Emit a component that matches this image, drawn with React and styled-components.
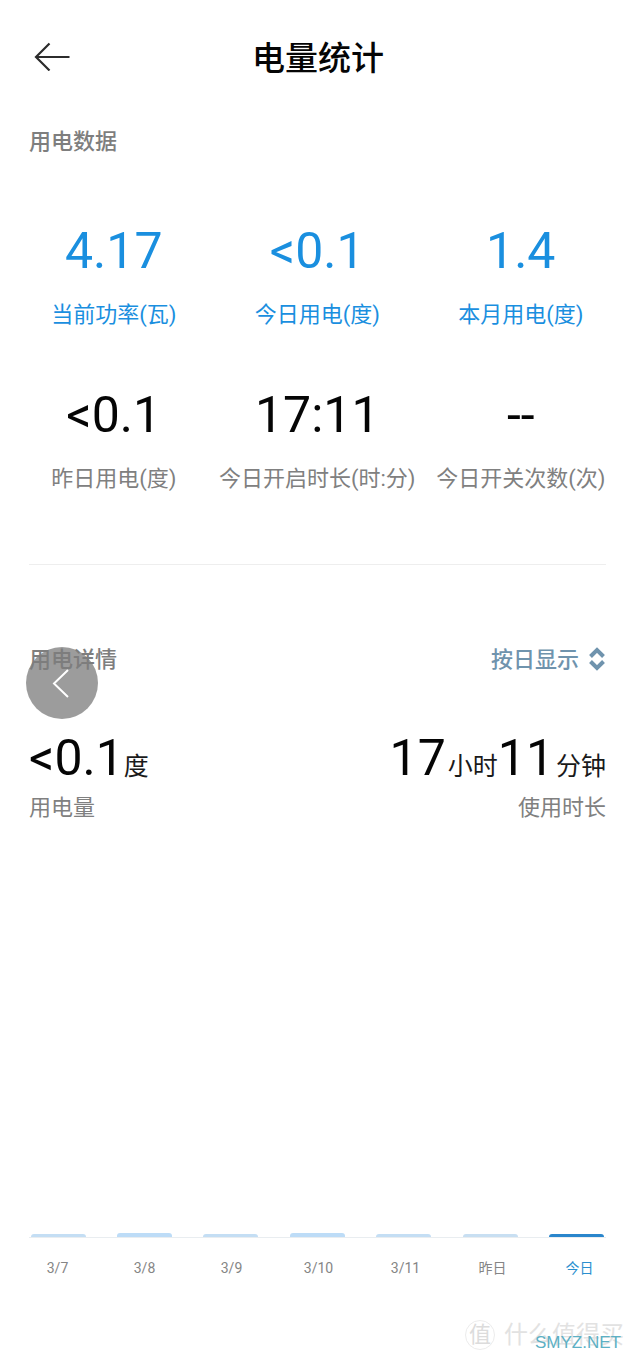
import React from "react";
import styled, { createGlobalStyle } from "styled-components";

const Global = createGlobalStyle`
  html, body { margin: 0; padding: 0; background: #fff; }
  body { font-family: Roboto, "Noto Sans CJK SC", sans-serif; }
`;
const Page = styled.div`
  position: relative;
  width: 632px;
  height: 1362px;
  overflow: hidden;
  background: #fff;
  display: flex;
  flex-direction: column;
`;
const Header = styled.header`
  position: relative;
  height: 58px;
  margin-top: 29px;
  display: flex;
  align-items: flex-start;
  justify-content: center;
  padding-left: 4px;
`;
const BackButton = styled.button`
  position: absolute;
  left: 34px;
  top: 12px;
  width: 36px;
  height: 30px;
  padding: 0;
  border: 0;
  background: none;
  color: #2c2c2c;
`;
const Title = styled.h1`
  margin: 0;
  font-size: 33px;
  line-height: 60px;
  font-weight: 500;
  color: #050505;
`;
const SectionTitle = styled.h2`
  margin: 0;
  font-size: 22px;
  line-height: 32px;
  font-weight: 500;
  color: #7e7e7e;
`;
const DataSection = styled.section`
  padding: 39px 26px 0 29px;
`;
const StatsGrid = styled.div`
  display: grid;
  grid-template-columns: repeat(3, 203.5px);
  margin: 61px 0 0 -17px;
  row-gap: 52px;
`;
const Stat = styled.div`
  display: flex;
  flex-direction: column;
  align-items: center;
  white-space: nowrap;
`;
const StatValue = styled.div`
  font-size: 50px;
  line-height: 64px;
  font-weight: 400;
  color: ${(p) => (p.$accent ? "#1a8fdf" : "#050505")};
`;
const StatLabel = styled.div`
  margin-top: 16px;
  font-size: 22px;
  line-height: 32px;
  font-weight: 400;
  color: ${(p) => (p.$accent ? "#1a8fdf" : "#808080")};
`;
const Divider = styled.hr`
  margin: 69px 26px 0 29px;
  border: 0;
  height: 1px;
  background: #eeeeee;
`;
const DetailSection = styled.section`
  padding: 79px 26px 0 29px;
`;
const DetailHead = styled.div`
  display: flex;
  justify-content: space-between;
  align-items: center;
`;
const ModeSwitch = styled.div`
  display: flex;
  align-items: center;
  gap: 9px;
  font-size: 22px;
  line-height: 32px;
  font-weight: 500;
  color: #6f93ad;
`;
const Chevrons = styled.svg`
  margin-bottom: 2px;
`;
const Totals = styled.div`
  display: flex;
  justify-content: space-between;
  margin-top: 52px;
`;
const Total = styled.div`
  display: flex;
  flex-direction: column;
  align-items: ${(p) => (p.$end ? "flex-end" : "flex-start")};
`;
const TotalValue = styled.div`
  display: flex;
  align-items: baseline;
  height: 60px;
  white-space: nowrap;
  color: #050505;
`;
const Big = styled.span`
  font-size: 50px;
  line-height: 60px;
  margin-right: ${(p) => p.$gap}px;
`;
const Unit = styled.span`
  font-size: 25px;
  line-height: 60px;
  font-weight: 400;
  color: #1a1a1a;
`;
const TotalLabel = styled.div`
  margin-top: 4px;
  font-size: 22px;
  line-height: 32px;
  font-weight: 400;
  color: #808080;
`;
const Chart = styled.div`
  margin: 401px 0 0 15px;
  display: grid;
  grid-template-columns: repeat(7, 86.4px);
  height: 12px;
  position: relative;
  &::after {
    content: "";
    position: absolute;
    left: 14px;
    right: 26px;
    bottom: -1px;
    height: 1px;
    background: #e9edf0;
  }
`;
const BarCell = styled.div`
  display: flex;
  align-items: flex-end;
  justify-content: center;
`;
const Bar = styled.div`
  width: 55px;
  height: ${(p) => p.$h}px;
  border-radius: 3px 3px 0 0;
  background: ${(p) => p.$c};
`;
const Axis = styled.div`
  margin: 21px 0 0 14px;
  display: grid;
  grid-template-columns: repeat(7, 87px);
`;
const Tick = styled.div`
  text-align: center;
  font-size: 14px;
  line-height: 20px;
  font-weight: 400;
  color: ${(p) => (p.$active ? "#2a8fcf" : "#858585")};
`;
const FloatBack = styled.button`
  position: absolute;
  left: 26px;
  top: 647px;
  width: 72px;
  height: 72px;
  padding: 0;
  border: 0;
  border-radius: 50%;
  background: rgba(125, 125, 125, 0.76);
  display: flex;
  align-items: center;
  justify-content: center;
`;
const Watermark = styled.div`
  position: absolute;
  left: 465px;
  top: 1320px;
  display: flex;
  align-items: center;
  gap: 9px;
  color: #e2e2e2;
`;
const SealMark = styled.span`
  width: 28px;
  height: 28px;
  border: 1px solid #ececec;
  border-radius: 50%;
  font-size: 22px;
  line-height: 28px;
  text-align: center;
  color: #dcdcdc;
`;
const BrandMark = styled.span`
  font-size: 24px;
  line-height: 30px;
  white-space: nowrap;
`;
const SiteMark = styled.div`
  position: absolute;
  left: 535px;
  top: 1333px;
  font-family: "Liberation Sans", sans-serif;
  font-size: 17px;
  line-height: 20px;
  color: #5cb0c4;
  white-space: nowrap;
`;

const stats = [
  ["4.17", "当前功率(瓦)", true],
  ["<0.1", "今日用电(度)", true],
  ["1.4", "本月用电(度)", true],
  ["<0.1", "昨日用电(度)", false],
  ["17:11", "今日开启时长(时:分)", false],
  ["--", "今日开关次数(次)", false],
];
const days = [
  ["3/7", 3, "#c4def4"],
  ["3/8", 4, "#bddcf7"],
  ["3/9", 3, "#c4def4"],
  ["3/10", 4, "#bddcf7"],
  ["3/11", 3, "#c4def4"],
  ["昨日", 3, "#c8dff2"],
  ["今日", 3, "#2a86cc"],
];

export default function App() {
  return (
    <Page>
      <Global />
      <Header>
        <BackButton aria-label="返回">
          <svg width="36" height="30" viewBox="0 0 36 30" fill="none" stroke="currentColor" strokeWidth="2.2">
            <path d="M35.5 16H2" />
            <path d="M15.5 2.5L2 16l13.5 13.5" />
          </svg>
        </BackButton>
        <Title>电量统计</Title>
      </Header>
      <DataSection>
        <SectionTitle>用电数据</SectionTitle>
        <StatsGrid>
          {stats.map(([v, l, a]) => (
            <Stat key={l}>
              <StatValue $accent={a}>{v}</StatValue>
              <StatLabel $accent={a}>{l}</StatLabel>
            </Stat>
          ))}
        </StatsGrid>
      </DataSection>
      <Divider />
      <DetailSection>
        <DetailHead>
          <SectionTitle>用电详情</SectionTitle>
          <ModeSwitch>
            按日显示
            <Chevrons width="18" height="24" viewBox="0 0 18 24" fill="none" stroke="currentColor" strokeWidth="4">
              <path d="M2.5 9.5L9 3l6.5 6.5" />
              <path d="M2.5 14.5L9 21l6.5-6.5" />
            </Chevrons>
          </ModeSwitch>
        </DetailHead>
        <Totals>
          <Total>
            <TotalValue>
              <Big $gap={0}>&lt;0.1</Big>
              <Unit>度</Unit>
            </TotalValue>
            <TotalLabel>用电量</TotalLabel>
          </Total>
          <Total $end>
            <TotalValue>
              <Big $gap={2}>17</Big>
              <Unit>小时</Unit>
              <Big $gap={2}>11</Big>
              <Unit>分钟</Unit>
            </TotalValue>
            <TotalLabel>使用时长</TotalLabel>
          </Total>
        </Totals>
      </DetailSection>
      <Chart>
        {days.map(([d, h, c]) => (
          <BarCell key={d}>
            <Bar $h={h} $c={c} />
          </BarCell>
        ))}
      </Chart>
      <Axis>
        {days.map(([d], i) => (
          <Tick key={d} $active={i === 6}>{d}</Tick>
        ))}
      </Axis>
      <FloatBack aria-label="收起">
        <svg width="20" height="32" viewBox="0 0 20 32" fill="none" stroke="#fff" strokeWidth="2">
          <path d="M16 3L2 16.5 16 30" />
        </svg>
      </FloatBack>
      <Watermark>
        <SealMark>值</SealMark>
        <BrandMark>什么值得买</BrandMark>
      </Watermark>
      <SiteMark>SMYZ.NET</SiteMark>
    </Page>
  );
}
